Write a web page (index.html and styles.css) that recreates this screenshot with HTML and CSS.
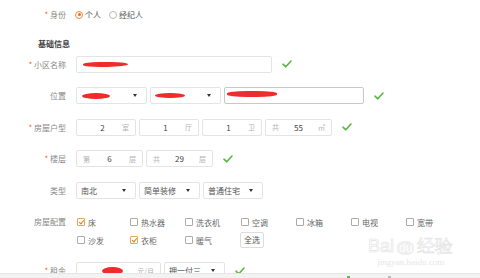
FILE: index.html
```html
<!DOCTYPE html>
<html lang="zh">
<head>
<meta charset="utf-8">
<link rel="stylesheet" href="styles.css">
</head>
<body>
<div class="page">
  <div class="row">
    <div class="label"><span class="req">*</span> 身份</div>
    <div class="ctrls radios">
      <label class="radio"><span class="dot on"></span>个人</label>
      <label class="radio"><span class="dot"></span>经纪人</label>
    </div>
  </div>

  <div class="section">基础信息</div>

  <div class="row">
    <div class="label"><span class="req">*</span> 小区名称</div>
    <div class="ctrls">
      <div class="box w196"><span class="blot b1"></span></div>
      <svg class="ok" viewBox="0 0 10 8"><polyline points="1,4.2 3.8,6.8 9,1"/></svg>
    </div>
  </div>

  <div class="row">
    <div class="label">位置</div>
    <div class="ctrls">
      <div class="box sel w71"><span class="blot b2"></span><span class="arr"></span></div>
      <div class="box sel w71"><span class="blot b3"></span><span class="arr"></span></div>
      <div class="box w140 dark"><span class="blot b4"></span></div>
      <svg class="ok" viewBox="0 0 10 8"><polyline points="1,4.2 3.8,6.8 9,1"/></svg>
    </div>
  </div>

  <div class="row">
    <div class="label"><span class="req">*</span> 房屋户型</div>
    <div class="ctrls">
      <div class="box unit w60"><span class="val">2</span><span class="u">室</span></div>
      <div class="box unit w60"><span class="val">1</span><span class="u">厅</span></div>
      <div class="box unit w60"><span class="val">1</span><span class="u">卫</span></div>
      <div class="box unit w67"><span class="u">共</span><span class="val">55</span><span class="u">㎡</span></div>
      <svg class="ok" viewBox="0 0 10 8"><polyline points="1,4.2 3.8,6.8 9,1"/></svg>
    </div>
  </div>

  <div class="row">
    <div class="label"><span class="req">*</span> 楼层</div>
    <div class="ctrls">
      <div class="box unit w67"><span class="u">第</span><span class="val">6</span><span class="u">层</span></div>
      <div class="box unit w67"><span class="u">共</span><span class="val">29</span><span class="u">层</span></div>
      <svg class="ok" viewBox="0 0 10 8"><polyline points="1,4.2 3.8,6.8 9,1"/></svg>
    </div>
  </div>

  <div class="row">
    <div class="label">类型</div>
    <div class="ctrls">
      <div class="box sel w60"><span class="txt">南北</span><span class="arr"></span></div>
      <div class="box sel w61"><span class="txt">简单装修</span><span class="arr"></span></div>
      <div class="box sel w60"><span class="txt">普通住宅</span><span class="arr"></span></div>
    </div>
  </div>

  <div class="cfg">
    <div class="label">房屋配置</div>
    <div class="grid">
      <label class="cb"><span class="sq on"></span>床</label>
      <label class="cb"><span class="sq"></span>热水器</label>
      <label class="cb"><span class="sq"></span>洗衣机</label>
      <label class="cb"><span class="sq"></span>空调</label>
      <label class="cb"><span class="sq"></span>冰箱</label>
      <label class="cb"><span class="sq"></span>电视</label>
      <label class="cb"><span class="sq"></span>宽带</label>
      <label class="cb"><span class="sq"></span>沙发</label>
      <label class="cb"><span class="sq on"></span>衣柜</label>
      <label class="cb"><span class="sq"></span>暖气</label>
      <div class="cb"><span class="btn">全选</span></div>
    </div>
  </div>

  <div class="row">
    <div class="label"><span class="req">*</span> 租金</div>
    <div class="ctrls">
      <div class="box w85 rent"><span class="blot b5"></span><span class="u">元/月</span></div>
      <div class="box sel w61"><span class="txt">押一付三</span><span class="arr"></span></div>
      <svg class="ok" viewBox="0 0 10 8"><polyline points="1,4.2 3.8,6.8 9,1"/></svg>
    </div>
  </div>

  <div class="bottom"><span class="m1"></span><span class="m2"></span></div>

  <div class="mark">
    <div class="logo">Bai<span class="du">du</span>经验</div>
    <div class="url">jingyan.baidu.com</div>
  </div>
</div>
</body>
</html>
```

FILE: styles.css
```css
* { box-sizing: border-box; }
html, body { margin: 0; padding: 0; background: #fff; }
body {
  font-family: "Noto Sans CJK SC", "Liberation Sans", sans-serif;
  font-size: 8px;
  color: #777;
  width: 480px;
  height: 278px;
  overflow: hidden;
}
.page { position: relative; width: 480px; height: 278px; padding-top: 6px; }
.row { display: flex; align-items: center; height: 17px; margin-bottom: 14.5px; }
.label { width: 66px; text-align: right; flex: none; line-height: 17px; white-space: nowrap; color: #888; }
.req { color: #f05a28; }
.ctrls { display: flex; align-items: center; margin-left: 10px; gap: 3px; }
.radios { gap: 8px; margin-left: 9px; }
.radio { display: flex; align-items: center; gap: 2px; color: #555; }
.dot { width: 8px; height: 8px; border: 1px solid #bbb; border-radius: 50%; position: relative; }
.dot.on { border-color: #f08a3c; }
.dot.on::after { content: ""; position: absolute; left: 1.5px; top: 1.5px; width: 3px; height: 3px; border-radius: 50%; background: #f0641e; }
.section { font-weight: bold; color: #444; padding-left: 38px; height: 12px; line-height: 12px; margin-top: 10px; margin-bottom: 6px; }
.box {
  height: 17px; border: 1px solid #e4e4e4; border-radius: 2px; background: #fff;
  display: flex; align-items: center; position: relative; padding: 0 6px; color: #555;
}
.box.dark { border-color: #c8c8c8; }
.w196 { width: 196px; }
.w71 { width: 71px; }
.w140 { width: 140px; }
.w60 { width: 60px; }
.w61 { width: 61px; }
.w67 { width: 67px; }
.w85 { width: 85px; }
.unit .val { flex: 1; text-align: center; color: #444; }
.unit .u, .rent .u { color: #b0b0b0; font-size: 7px; }
.rent { justify-content: flex-end; }
.sel { justify-content: space-between; padding-left: 4px; }
.sel .txt { color: #555; }
.arr { width: 0; height: 0; border-left: 2.5px solid transparent; border-right: 2.5px solid transparent; border-top: 3px solid #333; margin-left: auto; margin-right: 3px; }
.ok { width: 10px; height: 8px; margin-left: 7px; fill: none; stroke: #5cb544; stroke-width: 1.6; stroke-linecap: round; stroke-linejoin: round; }
.blot { position: absolute; background: #ef2b2b; border-radius: 50%; }
.b1 { left: 6px; top: 5px; width: 45px; height: 5px; transform: rotate(-1deg); border-radius: 40% 60% 50% 50%; }
.b2 { left: 5px; top: 5px; width: 28px; height: 6px; }
.b3 { left: 4px; top: 5px; width: 30px; height: 5px; }
.b4 { left: 2px; top: 3px; width: 50px; height: 6px; border-radius: 40%; }
.b5 { left: 25px; top: 4px; width: 21px; height: 8px; }
.cfg { display: flex; margin-bottom: 13px; }
.cfg .label { line-height: 17px; }
.grid { display: grid; grid-template-columns: 53px 55px 56px 55px 55px 55px 55px; grid-auto-rows: 18px; margin-left: 11px; }
.cb { display: flex; align-items: center; gap: 3px; color: #666; white-space: nowrap; }
.sq { width: 8px; height: 8px; border: 1px solid #aaa; border-radius: 1px; position: relative; background: #fff; }
.sq.on { border-color: #e8a85a; }
.sq.on::after { content: ""; position: absolute; left: 2px; top: 0px; width: 2px; height: 4px; border: solid #e07b20; border-width: 0 1px 1px 0; transform: rotate(40deg); }
.btn { border: 1px solid #ddd; border-radius: 2px; padding: 0 3px; height: 16px; line-height: 14px; margin-left: -1px; color: #555; }
.bottom { position: absolute; left: 0; right: 0; top: 273px; height: 5px; background: #f2f2f2; border-top: 1px solid #e6e6e6; }
.m1 { position: absolute; left: 347px; top: 2px; width: 3px; height: 3px; background: #63b56a; }
.m2 { position: absolute; left: 388px; top: 2px; width: 3px; height: 3px; background: #bbb; }
.mark { position: absolute; left: 368px; top: 236px; text-align: center; pointer-events: none; }
.logo { font-family: "Liberation Sans", sans-serif; font-size: 18px; line-height: 20px; -webkit-text-stroke: 0.6px #e2e2e2; color: rgba(255,255,255,0.6); white-space: nowrap; }
.logo .du { display: inline-block; background: #efefef; color: #fff; border-radius: 40%; font-size: 12px; line-height: 14px; padding: 0 2px; -webkit-text-stroke: 0; margin: 0 3px; }
.url { font-family: "Liberation Serif", serif; font-size: 9px; line-height: 10px; color: #e6e6e6; margin-top: 1px; }
```
